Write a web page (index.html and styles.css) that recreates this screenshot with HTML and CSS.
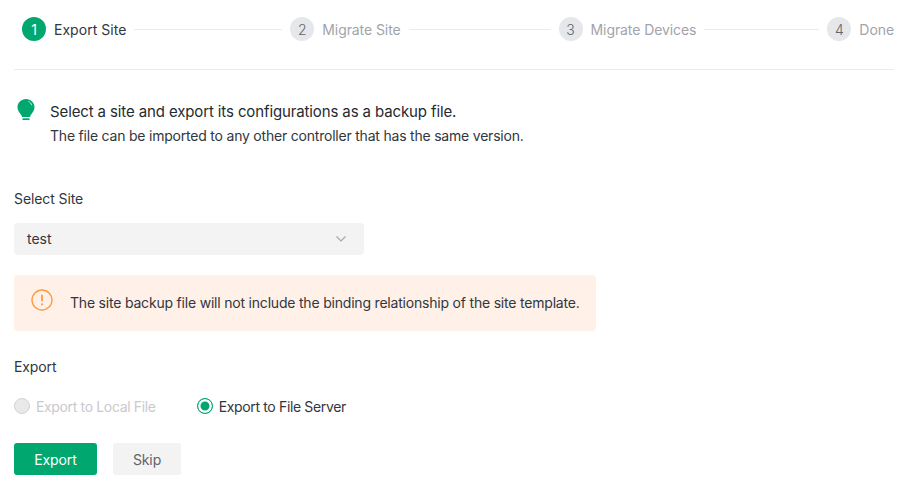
FILE: index.html
```html
<!DOCTYPE html>
<html lang="en">
<head>
<meta charset="utf-8">
<title>Migrate Site</title>
<link rel="stylesheet" href="styles.css">
</head>
<body>
<main class="page">
  <ol class="steps">
    <li class="step step-active"><span class="num">1</span><span class="step-label">Export Site</span></li>
    <li class="line line-1"></li>
    <li class="step"><span class="num">2</span><span class="step-label">Migrate Site</span></li>
    <li class="line line-2"></li>
    <li class="step"><span class="num">3</span><span class="step-label">Migrate Devices</span></li>
    <li class="line line-3"></li>
    <li class="step"><span class="num">4</span><span class="step-label">Done</span></li>
  </ol>

  <section class="intro">
    <svg class="bulb" width="20" height="24" viewBox="0 0 20 24" aria-hidden="true">
      <path d="M10 1C5 1 1.500 4.700 1.500 9.300c0 3 1.500 5 3 6.700.9 1 1.300 2 1.500 3h8c.2-1 .6-2 1.500-3 1.500-1.700 3-3.700 3-6.700C18.500 4.700 15 1 10 1z" fill="#00a870"/>
      <rect x="6.500" y="20.300" width="7" height="1.700" fill="#00a870"/>
      <path d="M12.500 3.500c1.600.7 2.800 2 3.200 3.800" fill="none" stroke="#bfeadb" stroke-width="1"/>
    </svg>
    <div>
      <p class="intro-title">Select a site and export its configurations as a backup file.</p>
      <p class="intro-sub">The file can be imported to any other controller that has the same version.</p>
    </div>
  </section>

  <div class="label label-site">Select Site</div>
  <div class="select">
    <span>test</span>
    <svg width="12" height="8" viewBox="0 0 12 8" aria-hidden="true"><path d="M1.500 1.500 6 6l4.500-4.500" fill="none" stroke="#a3a7ad" stroke-width="1.200"/></svg>
  </div>

  <div class="notice">
    <svg class="notice-icon" width="22" height="22" viewBox="0 0 22 22" aria-hidden="true">
      <circle cx="11" cy="11" r="10" fill="none" stroke="#ff9a47" stroke-width="1.400"/>
      <rect x="10.100" y="5.500" width="1.800" height="7" rx=".9" fill="#ff9a47"/>
      <circle cx="11" cy="15.300" r="1.100" fill="#ff9a47"/>
    </svg>
    <span>The site backup file will not include the binding relationship of the site template.</span>
  </div>

  <div class="label label-export">Export</div>
  <div class="radios">
    <label class="radio radio-disabled"><span class="dot"></span>Export to Local File</label>
    <label class="radio radio-on"><span class="dot"></span>Export to File Server</label>
  </div>

  <div class="actions">
    <button class="btn btn-primary" type="button">Export</button>
    <button class="btn btn-plain" type="button">Skip</button>
  </div>
</main>
</body>
</html>
```

FILE: styles.css
```css
* { box-sizing: border-box; }
html, body { margin: 0; padding: 0; background: #fff; }
body {
  font-family: Inter, "Noto Sans", sans-serif;
  font-size: 14px;
  color: #32363e;
  width: 912px;
  height: 490px;
  overflow: hidden;
}
.page { padding: 0 18px 0 14px; }
.steps {
  list-style: none;
  margin: 0;
  padding: 17px 0 28px 8px;
  display: flex;
  align-items: center;
  height: 70px;
  border-bottom: 1px solid #ebebed;
}
.step { display: flex; align-items: center; gap: 8px; white-space: nowrap; color: #a1a4aa; }
.step-label { font-size: 14px; letter-spacing: -.08px; }
.step-active .step-label { letter-spacing: .03px; }
.step-active { color: #32363e; }
.num {
  width: 24px; height: 24px; border-radius: 50%;
  display: flex; align-items: center; justify-content: center;
  background: #e6e7ea; color: #60646b; font-size: 14px; font-weight: 300;
}
.step-active .num { background: #00a870; color: #fff; font-weight: 400; }
.line { flex: 1 1 0; height: 1px; background: #ebebed; margin: 0 8px; }
.line-1 { flex-grow: 148; }
.line-2 { flex-grow: 142; }
.line-3 { flex-grow: 115; }

.intro { display: flex; gap: 14px; margin: 31px 0 0 2px; align-items: flex-start; }
.bulb { margin-top: -3px; flex: none; }
.intro p { margin: 0; }
.intro-title { font-size: 15px; line-height: 22px; color: #262a30; letter-spacing: -.12px; }
.intro-sub { font-size: 14px; line-height: 20px; padding-top: 3px; letter-spacing: -.21px; box-sizing: content-box; }

.label { line-height: 20px; letter-spacing: -.1px; }
.label-site { margin-top: 43px; }
.select {
  margin-top: 14px;
  width: 350px; height: 32px;
  background: #f3f3f3;
  border-radius: 4px;
  padding: 0 17px 0 13px;
  display: flex; align-items: center; justify-content: space-between;
}
.select span { position: relative; top: -1px; }
.notice {
  margin-top: 20px;
  width: 582px; height: 56px;
  background: #fff1e8;
  border-radius: 4px;
  padding: 0 15px 2px 17px;
  display: flex; align-items: center;
  letter-spacing: -.2px;
  white-space: nowrap;
}
.notice-icon { flex: none; margin: -4px 17px 0 0; }
.label-export { margin-top: 26px; }
.radios { display: flex; gap: 41px; margin-top: 19px; height: 20px; align-items: center; }
.radio { display: flex; align-items: center; gap: 6px; letter-spacing: -.35px; }
.dot { width: 16px; height: 16px; border-radius: 50%; border: 1px solid #d3d3d3; background: #e9e9e9; display: block; flex: none; }
.radio-disabled { color: #c9cacc; }
.radio-on .dot {
  background: #00a870;
  border: 1.500px solid #00a870;
  box-shadow: inset 0 0 0 2.500px #fff;
}
.actions { display: flex; gap: 16px; margin-top: 27px; }
.btn {
  height: 32px; border: 0; border-radius: 3px;
  font: inherit; letter-spacing: -.1px;
  padding: 0;
}
.btn-primary { width: 83px; background: #00a870; color: #fff; }
.btn-plain { width: 68px; background: #f3f3f3; color: #60646b; }
```
